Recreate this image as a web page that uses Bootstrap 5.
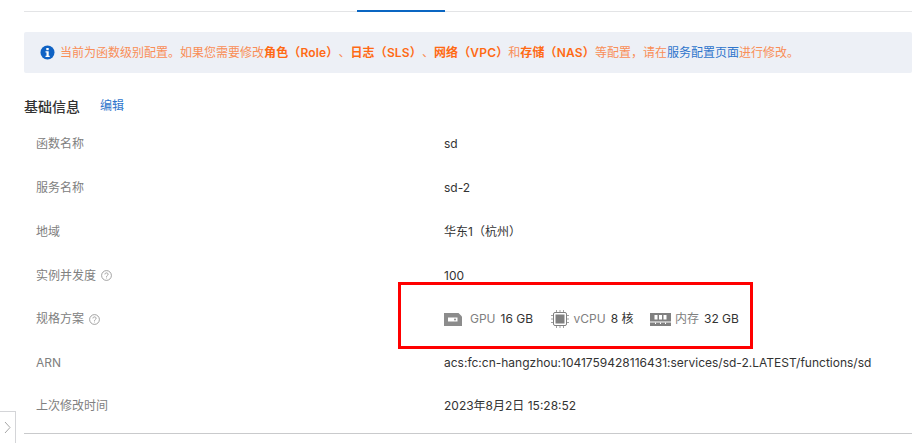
<!DOCTYPE html>
<html lang="zh-CN">
<head>
<meta charset="utf-8">
<title>函数配置</title>
<link href="https://cdn.jsdelivr.net/npm/bootstrap@5.3.0/dist/css/bootstrap.min.css" rel="stylesheet">
<style>
html,body{height:100%;overflow:hidden}
body{background:#fff;font-family:Inter,"Noto Sans CJK SC",sans-serif;font-size:12px;color:#333;position:relative;width:912px;height:443px;text-spacing-trim:space-all}
.page-wrap{padding-left:24px}
.tab-rail{height:12px;border-bottom:1px solid #e3e4e6;position:relative;margin-bottom:20px}
.tab-active{position:absolute;left:333px;bottom:-1px;width:88px;height:2px;background:#0a66c2}
.note-bar{height:41px;background:#edf0f6;border-radius:2px;padding-left:16px;color:#f98e57;margin-bottom:22px;gap:5px}
.note-bar b{color:#ff6a14;font-weight:600;letter-spacing:.15px}
.note-bar a{color:#2f75cc;text-decoration:none}
.section-head{height:22px;margin-bottom:5px}
.section-title{font-size:14px;font-weight:500;color:#333;width:76px}
.edit-link{color:#2f75cc;text-decoration:none}
.info-row{height:44px}
.info-row-short{height:43px}
.info-label{width:420px;padding-left:12px;color:#808080}
.info-value{color:#333}
.help-mark{width:11px;height:11px;margin-left:5px;flex:none}
.spec-icon{flex:none;margin-right:8px}
.spec-icon-cpu{margin-left:1px;margin-right:5px}
.spec-icon-mem{margin-right:4px}
.spec-name{color:#808080;margin-right:5px}
.spec-item{margin-right:16.5px}
.end-line{border-top:1px solid #c9cacc;margin-top:5px}
.red-frame{position:absolute;left:398px;top:282px;width:355px;height:67px;border:3px solid #f00;pointer-events:none}
.side-toggle{position:absolute;left:0;bottom:0;width:16px;height:32px;border:1px solid #d4d5d8;border-left:0;border-bottom:0;background:#fff}
</style>
</head>
<body>
<div class="page-wrap">
  <div class="tab-rail"><div class="tab-active"></div></div>
  <div class="note-bar d-flex align-items-center">
    <svg width="15" height="15" viewBox="0 0 15 15"><circle cx="7.5" cy="7.5" r="7" fill="#0f62c4"/><rect x="6.3" y="3" width="2.4" height="2.2" fill="#fff"/><path d="M5.5 6.2h3.2v4.6h1v1.2H5.5v-1.2h1V7.4h-1z" fill="#fff"/></svg>
    <span>当前为函数级别配置。如果您需要修改<b>角色（Role）</b>、<b>日志（SLS）</b>、<b>网络（VPC）</b>和<b>存储（NAS）</b>等配置，请在<a href="#">服务配置页面</a>进行修改。</span>
  </div>
  <div class="section-head d-flex align-items-center">
    <span class="section-title">基础信息</span><a class="edit-link" href="#">编辑</a>
  </div>
  <div class="info-row d-flex align-items-center"><div class="info-label">函数名称</div><div class="info-value">sd</div></div>
  <div class="info-row d-flex align-items-center"><div class="info-label">服务名称</div><div class="info-value">sd-2</div></div>
  <div class="info-row d-flex align-items-center"><div class="info-label">地域</div><div class="info-value">华东1（杭州）</div></div>
  <div class="info-row-short d-flex align-items-center"><div class="info-label d-flex align-items-center">实例并发度<svg class="help-mark" viewBox="0 0 11 11" fill="none" stroke="#8c8c8c" stroke-width=".8"><circle cx="5.5" cy="5.5" r="4.9"/><path d="M3.9 4.4c0-2 3.2-2 3.2-.1 0 1.2-1.6 1.2-1.6 2.5M5.5 7.6v.8"/></svg></div><div class="info-value">100</div></div>
  <div class="info-row d-flex align-items-center"><div class="info-label d-flex align-items-center">规格方案<svg class="help-mark" viewBox="0 0 11 11" fill="none" stroke="#8c8c8c" stroke-width=".8"><circle cx="5.5" cy="5.5" r="4.9"/><path d="M3.9 4.4c0-2 3.2-2 3.2-.1 0 1.2-1.6 1.2-1.6 2.5M5.5 7.6v.8"/></svg></div>
    <div class="info-value d-flex align-items-center">
      <div class="spec-item d-flex align-items-center"><svg class="spec-icon" width="18" height="13" viewBox="0 0 18 13"><path d="M0 0h14.5l3.5 3.5V13H0z" fill="#8c8c8c"/><path d="M4 4.5h9.5v4H4z" fill="#fff"/><circle cx="11" cy="6.5" r="1" fill="#8c8c8c"/></svg><span class="spec-name">GPU</span>16 GB</div>
      <div class="spec-item d-flex align-items-center"><svg class="spec-icon spec-icon-cpu" width="18" height="18" viewBox="0 0 18 18"><rect x="2.5" y="2.5" width="13" height="13" rx="1.5" fill="none" stroke="#808080"/><rect x="4.5" y="4.5" width="9" height="9" fill="#808080"/><path d="M5.5 0v2M9 0v2M12.5 0v2M5.5 16v2M9 16v2M12.5 16v2M0 5.5h2M0 9h2M0 12.5h2M16 5.5h2M16 9h2M16 12.5h2" stroke="#a0a0a0"/></svg><span class="spec-name">vCPU</span>8 核</div>
      <div class="d-flex align-items-center"><svg class="spec-icon spec-icon-mem" width="21" height="13" viewBox="0 0 21 13"><path d="M0 0h21v8.5H0z" fill="#808080"/><path d="M4.5 2h3v4.5h-3zM9 2h3v4.5H9zM13.5 2h3v4.5h-3z" fill="#fff"/><path d="M0 9.5h21V13H0z" fill="#808080"/><path d="M5 9.5h1v1.5H5zM10 9.5h1v1.5h-1zM15 9.5h1v1.5h-1z" fill="#fff"/></svg><span class="spec-name">内存</span>32 GB</div>
    </div>
  </div>
  <div class="info-row-short d-flex align-items-center"><div class="info-label">ARN</div><div class="info-value">acs:fc:cn-hangzhou:1041759428116431:services/sd-2.LATEST/functions/sd</div></div>
  <div class="info-row d-flex align-items-center"><div class="info-label">上次修改时间</div><div class="info-value">2023年8月2日 15:28:52</div></div>
  <div class="end-line"></div>
</div>
<div class="red-frame"></div>
<div class="side-toggle d-flex align-items-center justify-content-center"><svg width="7" height="13" viewBox="0 0 7 13" fill="none" stroke="#a6a6a6"><path d="M1 1l5 5.5L1 12"/></svg></div>
</body>
</html>
